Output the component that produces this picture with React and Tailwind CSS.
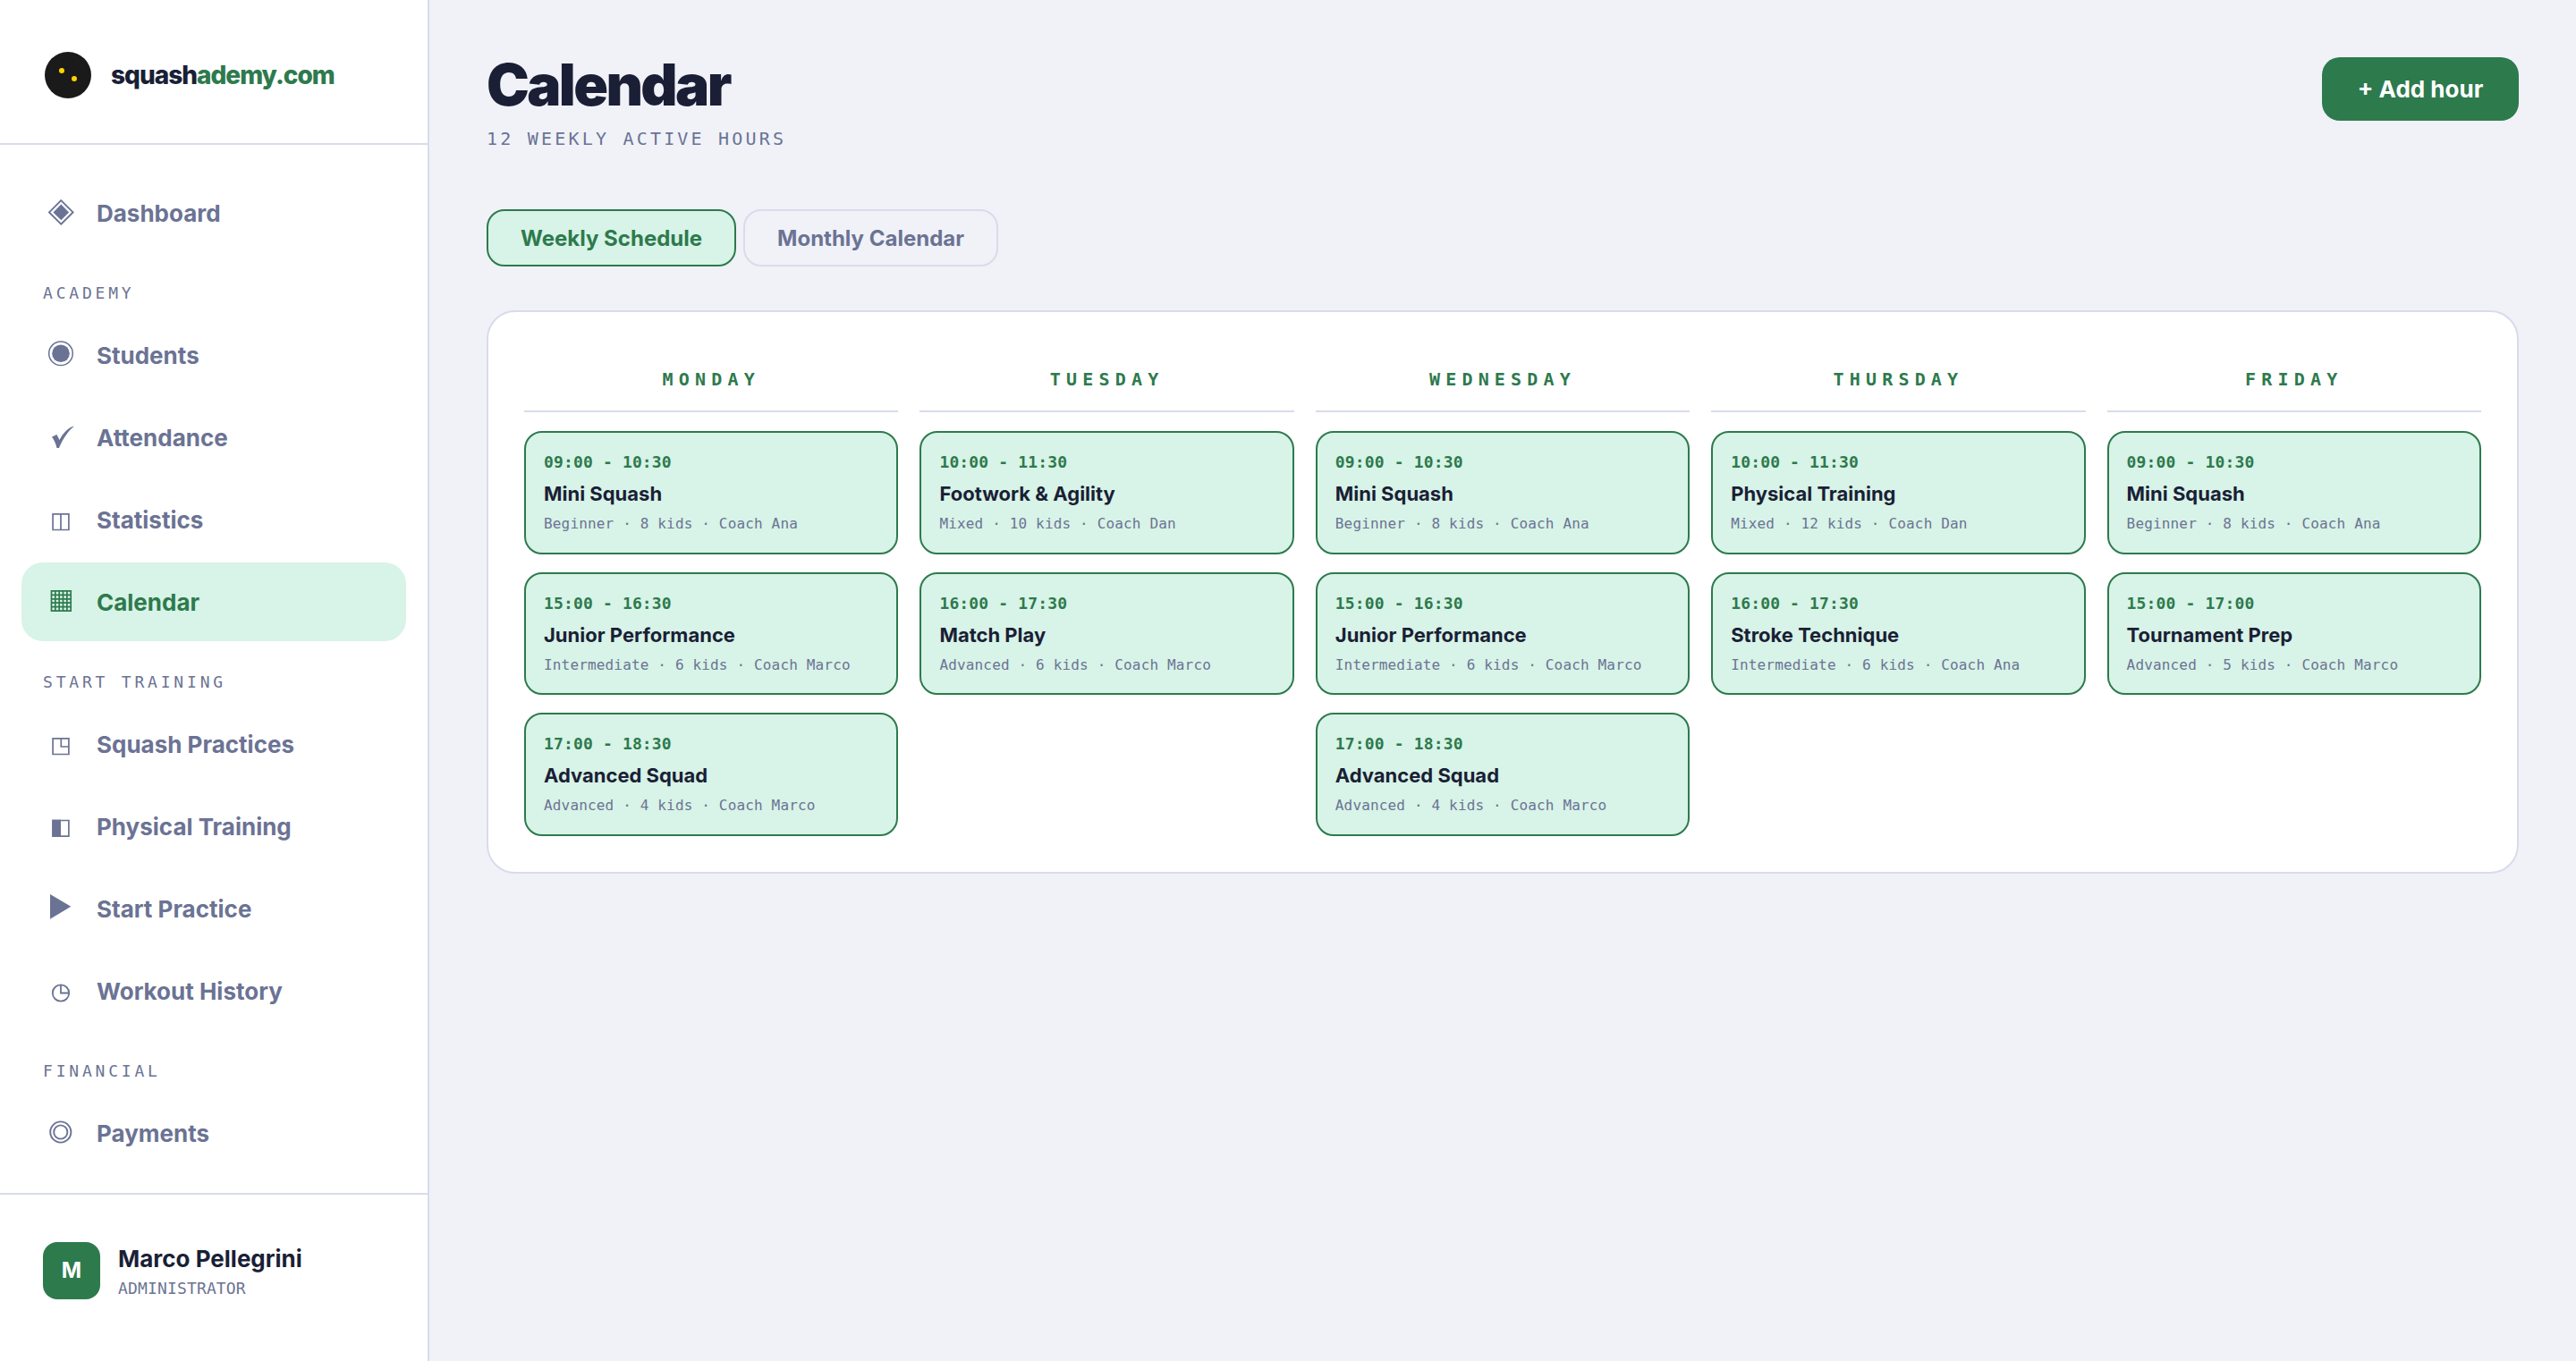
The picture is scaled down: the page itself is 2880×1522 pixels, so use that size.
const MONO = "font-['DejaVu_Sans_Mono',monospace]";

const ICONS = {
  dashboard: (
    <>
      <polygon points="20.3,6.1 33.6,19.4 20.3,32.7 7,19.4" fill="none" stroke="currentColor" strokeWidth="1.9" />
      <polygon points="20.3,10.6 29.1,19.4 20.3,28.2 11.5,19.4" fill="currentColor" />
    </>
  ),
  students: (
    <>
      <circle cx="20" cy="18.3" r="13.3" fill="none" stroke="currentColor" strokeWidth="1.5" />
      <circle cx="20" cy="18.3" r="9.8" fill="currentColor" />
    </>
  ),
  attendance: (
    <path d="M10 19.5 L15.5 17 L18.5 23 C22 16 28 9 35 7.5 C29 12 22 22 18 32 L15.5 32 C14.5 27 12.5 23 10 19.5 Z" fill="currentColor" />
  ),
  statistics: (
    <path d="M11.1 13.8H28.9V31.5H11.1Z M20 13.8V31.5" fill="none" stroke="currentColor" strokeWidth="1.7" />
  ),
  calendar: (
    <path d="M9.5 7.8H31.2V30.2H9.5Z M13.8 7.8V30.2 M18.2 7.8V30.2 M22.5 7.8V30.2 M26.9 7.8V30.2 M9.5 12.3H31.2 M9.5 16.8H31.2 M9.5 21.2H31.2 M9.5 25.7H31.2" fill="none" stroke="currentColor" strokeWidth="1.7" />
  ),
  practices: (
    <path d="M11.1 13.8H28.9V31.5H11.1Z M20.3 13.8V23H28.9" fill="none" stroke="currentColor" strokeWidth="1.7" />
  ),
  physical: (
    <>
      <path d="M11.1 13.5H28.9V31.2H11.1Z" fill="none" stroke="currentColor" strokeWidth="1.7" />
      <path d="M10.3 12.7H20V32H10.3Z" fill="currentColor" />
    </>
  ),
  play: <polygon points="8,4 31.3,17.8 8,31.7" fill="currentColor" />,
  history: (
    <path d="M29.2 22.5A9.2 9.2 0 1 1 10.8 22.5A9.2 9.2 0 1 1 29.2 22.5Z M20 13.3V22.5H29.2" fill="none" stroke="currentColor" strokeWidth="1.8" />
  ),
  payments: (
    <>
      <circle cx="19.8" cy="19" r="11.6" fill="none" stroke="currentColor" strokeWidth="1.9" />
      <circle cx="19.8" cy="19" r="7.6" fill="none" stroke="currentColor" strokeWidth="1.9" />
    </>
  ),
};

function NavItem({ icon, label, active }) {
  return (
    <div className={`flex h-[88px] items-center gap-5 rounded-[24px] px-6 ${active ? 'bg-[#d8f3e7] text-[#2d7a4d]' : 'text-[#6b7394]'}`}>
      <svg width="40" height="40" viewBox="0 0 40 40" className="shrink-0">{ICONS[icon]}</svg>
      <span className="text-[26px] font-bold">{label}</span>
    </div>
  );
}

function NavLabel({ children }) {
  return (
    <div className={`${MONO} flex h-[71px] items-center px-6 pt-[20px] text-[18px] tracking-[3.8px] text-[#6b7394]`}>
      {children}
    </div>
  );
}

function Sidebar() {
  return (
    <aside className="flex h-[1522px] w-[480px] shrink-0 flex-col border-r-2 border-[#d8dcea] bg-white">
      <div className="flex h-[162px] items-start gap-5 border-b-2 border-[#d8dcea] px-12 pt-14">
        <svg width="56" height="56" viewBox="0 0 56 56" className="shrink-0">
          <circle cx="28" cy="28" r="26" fill="#1a1a1a" />
          <circle cx="21" cy="23" r="3" fill="#ffd400" />
          <circle cx="35" cy="32" r="3" fill="#ffd400" />
        </svg>
        <div className="text-[28px] font-extrabold leading-[56px] tracking-[-1px] text-[#1a1f36]">
          squash<span className="text-[#2d7a4d]">ademy.com</span>
        </div>
      </div>
      <nav className="flex flex-1 flex-col px-6 pt-8">
        <NavItem icon="dashboard" label="Dashboard" />
        <NavLabel>ACADEMY</NavLabel>
        <div className="flex flex-col gap-1">
          <NavItem icon="students" label="Students" />
          <NavItem icon="attendance" label="Attendance" />
          <NavItem icon="statistics" label="Statistics" />
          <NavItem icon="calendar" label="Calendar" active />
        </div>
        <NavLabel>START TRAINING</NavLabel>
        <div className="flex flex-col gap-1">
          <NavItem icon="practices" label="Squash Practices" />
          <NavItem icon="physical" label="Physical Training" />
          <NavItem icon="play" label="Start Practice" />
          <NavItem icon="history" label="Workout History" />
        </div>
        <NavLabel>FINANCIAL</NavLabel>
        <NavItem icon="payments" label="Payments" />
      </nav>
      <div className="flex h-[188px] items-start gap-[20px] border-t-2 border-[#d8dcea] px-12 pt-[53px]">
        <div className="flex h-16 w-16 shrink-0 items-center justify-center rounded-[16px] bg-[#2d7a4d] text-[24px] font-bold text-white">M</div>
        <div className="flex flex-col pt-[1px]">
          <div className="text-[26px] font-bold leading-[36px] text-[#1a1f36]">Marco Pellegrini</div>
          <div className={`${MONO} mt-[2px] text-[18px] leading-[26px] tracking-[0.15px] text-[#6b7394]`}>ADMINISTRATOR</div>
        </div>
      </div>
    </aside>
  );
}

function Card({ time, title, meta }) {
  return (
    <div className="h-[137.5px] rounded-[20px] border-2 border-[#2d7a4d] bg-[#d8f3e7] px-5 pt-[19px]">
      <div className={`${MONO} text-[18px] font-bold leading-[27px] tracking-[0.15px] text-[#2d7a4d]`}>{time}</div>
      <div className="mt-[6px] text-[22px] font-bold leading-[32px] text-[#1a1f36]">{title}</div>
      <div className={`${MONO} mt-[6px] text-[16px] leading-[24px] tracking-[0.16px] text-[#6b7394]`}>{meta}</div>
    </div>
  );
}

const days = [
  ['MONDAY', [
    ['09:00 - 10:30', 'Mini Squash', 'Beginner · 8 kids · Coach Ana'],
    ['15:00 - 16:30', 'Junior Performance', 'Intermediate · 6 kids · Coach Marco'],
    ['17:00 - 18:30', 'Advanced Squad', 'Advanced · 4 kids · Coach Marco'],
  ]],
  ['TUESDAY', [
    ['10:00 - 11:30', 'Footwork & Agility', 'Mixed · 10 kids · Coach Dan'],
    ['16:00 - 17:30', 'Match Play', 'Advanced · 6 kids · Coach Marco'],
  ]],
  ['WEDNESDAY', [
    ['09:00 - 10:30', 'Mini Squash', 'Beginner · 8 kids · Coach Ana'],
    ['15:00 - 16:30', 'Junior Performance', 'Intermediate · 6 kids · Coach Marco'],
    ['17:00 - 18:30', 'Advanced Squad', 'Advanced · 4 kids · Coach Marco'],
  ]],
  ['THURSDAY', [
    ['10:00 - 11:30', 'Physical Training', 'Mixed · 12 kids · Coach Dan'],
    ['16:00 - 17:30', 'Stroke Technique', 'Intermediate · 6 kids · Coach Ana'],
  ]],
  ['FRIDAY', [
    ['09:00 - 10:30', 'Mini Squash', 'Beginner · 8 kids · Coach Ana'],
    ['15:00 - 17:00', 'Tournament Prep', 'Advanced · 5 kids · Coach Marco'],
  ]],
];

export default function App() {
  return (
    <div className="flex min-h-[1522px] bg-[#f0f2f8] font-['Inter',sans-serif]">
      <Sidebar />
      <main className="flex-1 px-16 pt-16">
        <header className="flex items-start justify-between">
          <div>
            <h1 className="text-[64px] font-black leading-[62px] tracking-[-2.6px] text-[#1a1f36]">Calendar</h1>
            <div className={`${MONO} mt-[15px] text-[20px] leading-[29px] tracking-[3.2px] text-[#6b7394]`}>12 WEEKLY ACTIVE HOURS</div>
          </div>
          <button className="h-[71px] w-[220px] rounded-[20px] bg-[#2d7a4d] text-[26px] font-bold text-white">+ Add hour</button>
        </header>
        <div className="mt-16 flex gap-2">
          <button className="h-16 rounded-[20px] border-2 border-[#2d7a4d] bg-[#d8f3e7] px-9 pt-[2px] text-[24px] font-bold text-[#2d7a4d]">Weekly Schedule</button>
          <button className="h-16 rounded-[20px] border-2 border-[#d8dcea] px-9 pt-[2px] text-[24px] font-bold text-[#6b7394]">Monthly Calendar</button>
        </div>
        <section className="mt-[49px] grid grid-cols-5 gap-x-6 rounded-[32px] border-2 border-[#d8dcea] bg-white p-10">
          {days.map(([day, cards]) => (
            <div key={day} className="flex flex-col">
              <div className={`${MONO} h-[72px] border-b-2 border-[#d8dcea] pt-[21px] text-center text-[20px] font-bold leading-[28px] tracking-[6.2px] text-[#2d7a4d]`}>{day}</div>
              <div className="mt-[21px] flex flex-col gap-5">
                {cards.map((c) => <Card key={c[0]} time={c[0]} title={c[1]} meta={c[2]} />)}
              </div>
            </div>
          ))}
        </section>
      </main>
    </div>
  );
}
